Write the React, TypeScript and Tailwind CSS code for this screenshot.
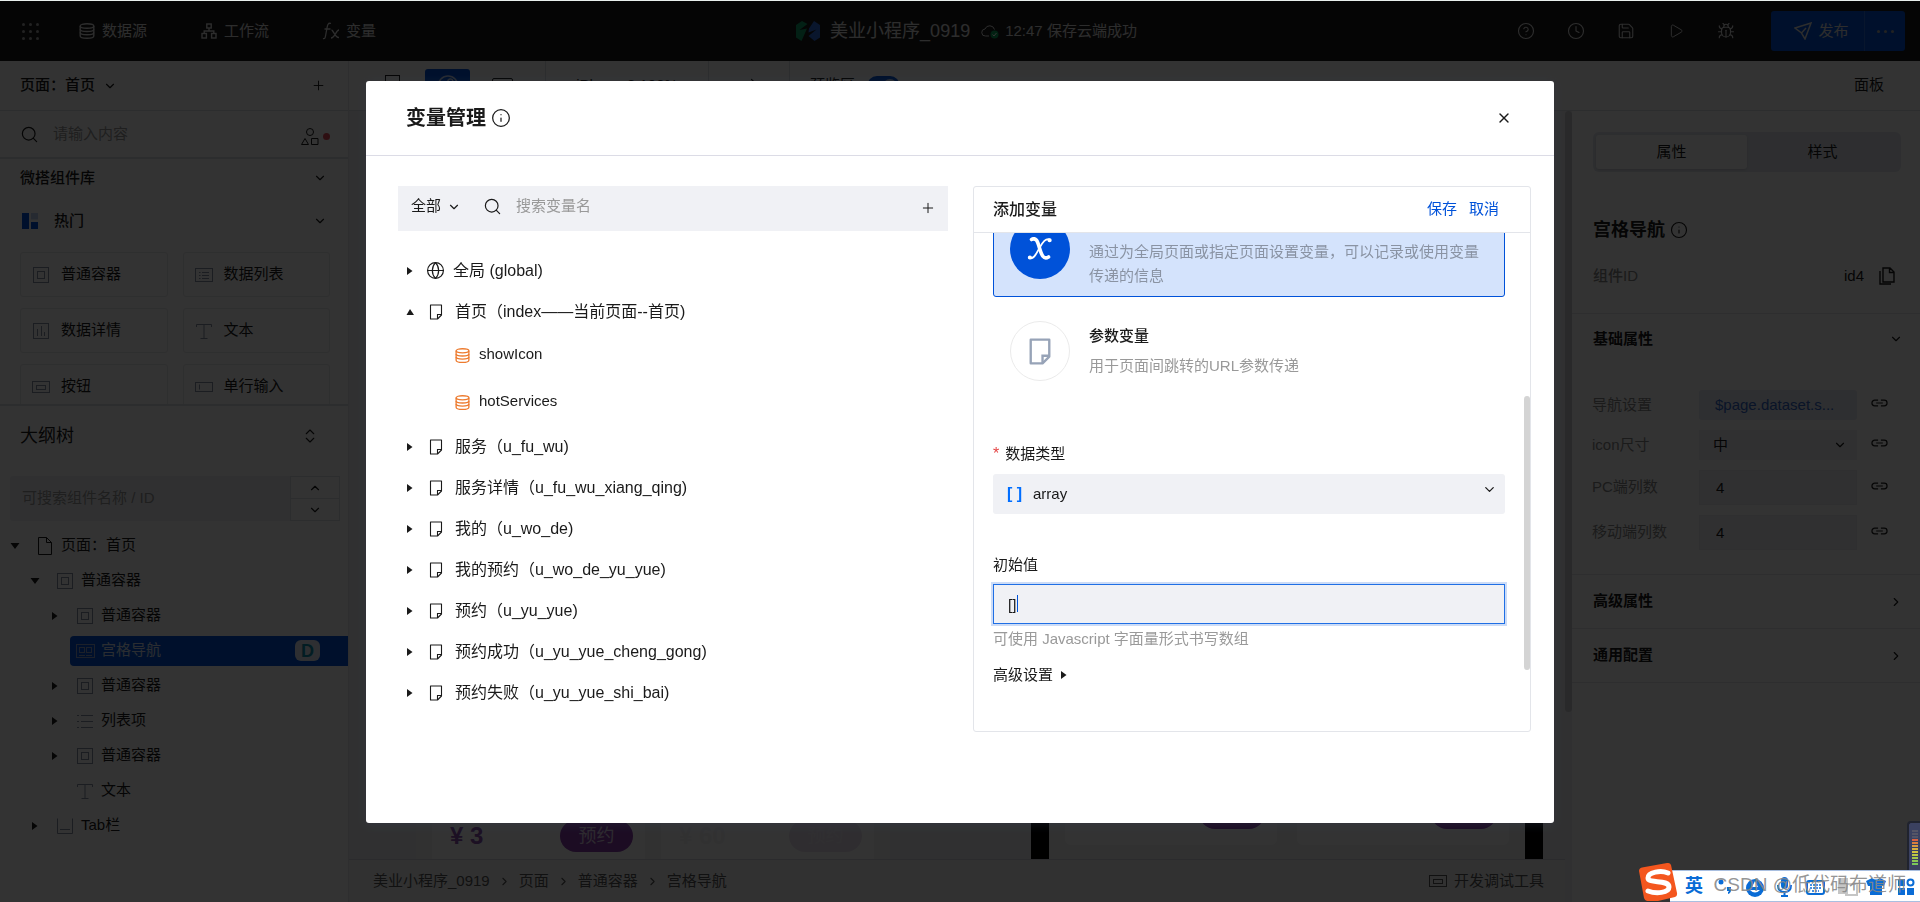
import React from "react";
import {
  Bug,
  ChevronDown,
  ChevronRight,
  ChevronUp,
  ChevronsUpDown,
  CircleHelp,
  Clock,
  Globe,
  Info,
  Plus,
  Play,
  Redo2,
  Save,
  Search,
  X,
} from "lucide-react";

type IconName =
  | "box"
  | "list"
  | "chart"
  | "text"
  | "button"
  | "input"
  | "grid"
  | "items"
  | "tab"
  | "page";

const iconShapes: Record<IconName, React.ReactNode> = {
  box: (
    <>
      <rect x="0.5" y="0.5" width="15" height="15" />
      <rect x="4.5" y="4.5" width="7" height="7" />
    </>
  ),
  list: (
    <>
      <rect x="-0.5" y="1.5" width="17" height="13" />
      <path d="M3 5.5h1.500M6 5.5h7M3 8.5h1.500M6 8.5h7M3 11.5h1.500M6 11.5h7" />
    </>
  ),
  chart: (
    <>
      <rect x="0.5" y="0.5" width="15" height="15" />
      <path d="M4.5 6v7M8.5 3v10M11.5 9v4" />
    </>
  ),
  text: <path d="M0.500 4V1.500h15V4M8 1.500v14M4.500 15.500h7" />,
  button: (
    <>
      <rect x="-0.5" y="2.5" width="17" height="11" />
      <rect x="3.5" y="6.5" width="9" height="4" />
    </>
  ),
  input: (
    <>
      <rect x="-0.5" y="3.5" width="17" height="9" />
      <path d="M3.500 5.500v5" />
    </>
  ),
  grid: (
    <>
      <rect x="-0.5" y="1.5" width="18" height="13" />
      <rect x="2.5" y="4.500" width="5" height="5" />
      <rect x="9.500" y="4.500" width="5" height="5" />
      <path d="M2 12.500h6M9 12.500h6" />
    </>
  ),
  items: <path d="M0 2.500h2M4 2.500h12M0 8.500h2M4 8.500h12M0 14.500h2M4 14.500h12" />,
  tab: <path d="M0.500 0.500v15h15V0.500M3 11.500h10" />,
  page: <path d="M1.500 -0.500h8l5 5v12H1.500zM9.500 -0.500V4.500H14.500" />,
};

const Shape = ({ name, className = "" }: { name: IconName; className?: string }) => (
  <svg
    viewBox="0 0 16 16"
    className={`size-4 shrink-0 overflow-visible ${className}`}
    fill="none"
    stroke="currentColor"
  >
    {iconShapes[name]}
  </svg>
);

const NoteIcon = ({ className = "", stroke = 1.1 }: { className?: string; stroke?: number }) => (
  <svg viewBox="0 0 14 16" className={className} fill="none" stroke="currentColor" strokeWidth={stroke}>
    <path d="M1.500 1h11v10l-4 4h-7z" strokeLinejoin="round" />
    <path d="M12.500 10.500H8.500V15" />
  </svg>
);

const CylinderIcon = ({ className = "" }: { className?: string }) => (
  <svg viewBox="0 0 16 16" className={className} fill="none" stroke="currentColor" strokeWidth="1.4">
    <ellipse cx="8" cy="3" rx="6.800" ry="2.200" />
    <path d="M1.200 3v10c0 1.300 3 2.300 6.800 2.300s6.800-1 6.800-2.300V3" />
    <path d="M1.200 6.300c0 1.300 3 2.200 6.800 2.200s6.800-.9 6.800-2.200M1.200 9.600c0 1.300 3 2.200 6.800 2.200s6.800-.9 6.800-2.200" />
  </svg>
);

const Triangle = ({ dir }: { dir: "right" | "down" | "up" | "none" }) => (
  <svg viewBox="0 0 10 10" className="size-[10px] shrink-0" fill="currentColor">
    {dir === "right" && <path d="M2 1L7.500 5L2 9z" />}
    {dir === "down" && <path d="M0.500 2h9L5 8z" />}
    {dir === "up" && <path d="M1.500 8h7.500L5 2z" />}
  </svg>
);

const TopBar = () => (
  <header className="flex h-[61px] shrink-0 items-center border-t border-[#e8efec] bg-[#1a1a1a] pl-2 text-[15px] text-[#e0e0e0]">
    <div className="flex flex-1 items-center">
      <button aria-label="应用" className="ml-[14px] grid size-[17px] grid-cols-3 gap-1">
        {Array.from({ length: 9 }, (_, i) => (
          <span key={i} className="size-[3px] rounded-full bg-[#aaa]" />
        ))}
      </button>
      <button className="ml-10 flex items-center gap-[7px]">
        <CylinderIcon className="size-4" />
        数据源
      </button>
      <button className="ml-[54px] flex items-center gap-[7px]">
        <svg viewBox="0 0 16 16" className="size-4" fill="none" stroke="currentColor" strokeWidth="1.4">
          <rect x="5.800" y="1" width="4.400" height="4" />
          <rect x="1" y="10.500" width="4.400" height="4.500" />
          <rect x="10.600" y="10.500" width="4.400" height="4.500" />
          <path d="M8 5v3M3.200 10.500V8h9.600v2.500" />
        </svg>
        工作流
      </button>
      <button className="ml-[53px] flex items-center gap-[6px]">
        <svg viewBox="0 0 18 18" className="size-[18px]" fill="none" stroke="currentColor" strokeWidth="1.3">
          <path d="M9 1.500C6 .5 5.500 3 5 6L3.500 14c-.4 2.500-1 3-2.500 2.500M2.500 7h6M9.500 8c2 0 3.500 8 7.500 7.500M17 8c-3 0-4 8-8 8" />
        </svg>
        变量
      </button>
    </div>
    <div className="flex items-center pl-5 text-lg">
      <svg viewBox="0 0 24 20" className="mr-[10px] h-5 w-6">
        <path d="M0 4l6-4 5.500 3L3.500 9 11 7.500 5.500 20 0 16.500z" fill="#12a06b" />
        <path d="M24 4l-6-4-5 7.500-.5 4 8-3L12.500 15l6 5L24 16.500z" fill="#2f6fe0" />
      </svg>
      美业小程序_0919
      <svg viewBox="0 0 18 16" className="ml-[11px] mr-[6px] h-4 w-[18px]" fill="none" stroke="currentColor">
        <path d="M8 13H4.500a3.500 3.500 0 0 1-.5-7 5 5 0 0 1 9.500.5" />
        <circle cx="13.500" cy="11.500" r="4" fill="#0aa55c" stroke="none" />
        <path d="M11.500 11.500l1.500 1.500 2.500-3" stroke="#fff" />
      </svg>
      <span className="text-[15px]">12:47 保存云端成功</span>
    </div>
    <div className="flex flex-1 items-center justify-end gap-8 pr-[15px]">
      <button aria-label="帮助"><CircleHelp size={18} strokeWidth={1.5} /></button>
      <button aria-label="历史"><Clock size={18} strokeWidth={1.5} /></button>
      <button aria-label="保存文件"><Save size={18} strokeWidth={1.5} /></button>
      <button aria-label="预览" className="px-px"><Play size={16} strokeWidth={1.5} /></button>
      <button aria-label="调试"><Bug size={18} strokeWidth={1.5} /></button>
      <div className="ml-1 flex h-10 overflow-hidden rounded-[3px] bg-[#0052d9]">
        <button className="flex w-[94px] items-center justify-center gap-[6px] border-r border-[#2a6de0] pl-2">
          <svg viewBox="0 0 18 18" className="size-[18px]" fill="none" stroke="currentColor" strokeWidth="1.5">
            <path d="M1 6l16-5-6 16-3.500-6zM7.500 11L12 6" />
          </svg>
          发布
        </button>
        <button aria-label="更多" className="flex w-10 items-center justify-center gap-1">
          <span className="size-[3px] rounded-full bg-[#aaa]" />
          <span className="size-[3px] rounded-full bg-[#aaa]" />
          <span className="size-[3px] rounded-full bg-[#aaa]" />
        </button>
      </div>
    </div>
  </header>
);

const widgets: { icon: IconName; label: string }[] = [
  { icon: "box", label: "普通容器" },
  { icon: "list", label: "数据列表" },
  { icon: "chart", label: "数据详情" },
  { icon: "text", label: "文本" },
  { icon: "button", label: "按钮" },
  { icon: "input", label: "单行输入" },
];

interface IOutlineRow {
  level: number;
  icon: IconName;
  label: string;
  dir: "right" | "down" | "none";
}

const outline: IOutlineRow[] = [
  { level: 1, icon: "box", label: "普通容器", dir: "down" },
  { level: 2, icon: "box", label: "普通容器", dir: "right" },
  { level: 2, icon: "grid", label: "宫格导航", dir: "none" },
  { level: 2, icon: "box", label: "普通容器", dir: "right" },
  { level: 2, icon: "items", label: "列表项", dir: "right" },
  { level: 2, icon: "box", label: "普通容器", dir: "right" },
  { level: 2, icon: "text", label: "文本", dir: "none" },
  { level: 1, icon: "tab", label: "Tab栏", dir: "right" },
];

const indents = ["pl-[10px]", "pl-[30px]", "pl-[50px]"];

const OutlineRow = ({ level, icon, label, dir }: IOutlineRow) => {
  if (icon === "grid") {
    return (
      <li className="flex h-[35px] items-center pl-[70px]">
        <div className="flex h-[30px] flex-1 items-center rounded-l-sm bg-[#0052d9] pl-[7px] pr-7 text-[#d8e2f5]">
          <Shape name={icon} className="text-[#8aa0cc]" />
          <span className="ml-2 flex-1">{label}</span>
          <span className="flex h-[21px] w-[25px] items-center justify-center rounded-md bg-[#e3ecf7] text-lg font-bold text-[#0a8fb0]">
            D
          </span>
        </div>
      </li>
    );
  }
  return (
    <li className={`flex h-[35px] items-center ${indents[level]}`}>
      <Triangle dir={dir} />
      <Shape name={icon} className="ml-[17px] mr-2 text-[#8790a5]" />
      {label}
    </li>
  );
};

const LeftPanel = () => (
  <aside className="flex w-[349px] shrink-0 flex-col border-r border-[#e3e5ea] bg-white text-[15px] text-[#1a1a1a]">
    <div className="flex h-[50px] shrink-0 items-center justify-between border-b border-[#dcdfe6] pl-5 pr-[22px]">
      <button className="flex items-center gap-2 font-medium">
        页面：首页 <ChevronDown size={14} />
      </button>
      <button aria-label="新建页面"><Plus size={15} strokeWidth={1.5} /></button>
    </div>
    <div className="flex h-12 shrink-0 items-center border-b-2 border-[#dcdfe6] pl-5 pr-[18px] pt-px">
      <Search size={19} strokeWidth={1.5} />
      <input
        aria-label="搜索组件"
        placeholder="请输入内容"
        className="ml-[14px] min-w-0 flex-1 outline-none placeholder:text-[#999]"
      />
      <svg viewBox="0 0 18 18" className="mt-1 size-[18px]" fill="none" stroke="currentColor">
        <circle cx="9" cy="4" r="3.500" />
        <path d="M0.500 16.500L4 10.500l3.500 6zM10.500 10.500h6.500v6h-6.500z" />
      </svg>
      <span className="ml-1 mt-1 size-[7px] rounded-full bg-[#e34d59]" />
    </div>
    <div className="h-[245px] shrink-0 overflow-hidden pl-5 pr-[18px]">
      <button className="flex h-[38px] w-full items-center justify-between pr-[3px] font-medium">
        微搭组件库 <ChevronDown size={14} />
      </button>
      <button className="flex h-12 w-full items-center pr-[3px] font-medium">
        <svg viewBox="0 0 16 16" className="ml-[2px] mr-4 size-4">
          <path d="M0 0h7v16H0z" fill="#0052d9" />
          <path d="M9 9h7v7H9z" fill="#0052d9" />
          <path d="M9 0h7v6.500H9z" fill="#bcd0f5" />
        </svg>
        <span className="flex-1 text-left">热门</span>
        <ChevronDown size={14} />
      </button>
      <div className="grid grid-cols-2 gap-x-[15px] gap-y-[11px] pt-[7px]">
        {widgets.map(({ icon, label }) => (
          <button
            key={label}
            className="flex h-[45px] items-center rounded-[3px] border border-[#e6e8ec] pl-3"
          >
            <Shape name={icon} className="mr-3 text-[#8790a5]" />
            {label}
          </button>
        ))}
      </div>
    </div>
    <div className="flex h-[62px] shrink-0 items-center justify-between border-t-2 border-[#dcdfe6] pl-5 pr-[29px] text-lg">
      大纲树
      <button aria-label="展开大纲树"><ChevronsUpDown size={18} strokeWidth={1.5} /></button>
    </div>
    <div className="ml-[10px] mr-2 mt-[10px] flex h-[45px] shrink-0 rounded-[3px] bg-[#f0f1f5]">
      <input
        aria-label="搜索大纲树"
        placeholder="可搜索组件名称 / ID"
        className="min-w-0 flex-1 px-3 outline-none placeholder:text-[#999]"
      />
      <div className="flex w-[50px] flex-col divide-y divide-[#dcdfe6] border border-[#dcdfe6] bg-white">
        <button aria-label="上一个" className="flex flex-1 items-center justify-center">
          <ChevronUp size={14} />
        </button>
        <button aria-label="下一个" className="flex flex-1 items-center justify-center">
          <ChevronDown size={14} />
        </button>
      </div>
    </div>
    <ul className="mt-[7px]">
      <li className="flex h-[35px] items-center pl-[10px]">
        <Triangle dir="down" />
        <Shape name="page" className="ml-[17px] mr-2" />
        页面：首页
      </li>
      {outline.map((row, i) => (
        <OutlineRow key={i} {...row} />
      ))}
    </ul>
  </aside>
);

const Toolbar = () => (
  <div className="flex h-[50px] shrink-0 items-center border-b border-[#dcdfe6] bg-white text-[15px] text-[#1a1a1a]">
    <button aria-label="手机" className="ml-9 h-[22px] w-[15px] border border-current" />
    <button
      aria-label="小程序"
      className="ml-[25px] flex h-[34px] w-[45px] items-center justify-center rounded-[3px] bg-[#0052d9] text-[#c5d6f5]"
    >
      <svg viewBox="0 0 22 22" className="size-[22px]" fill="none" stroke="currentColor" strokeWidth="1.500">
        <circle cx="11" cy="11" r="10" />
        <path d="M8 13a2.500 2.500 0 1 0 3 2V7a2.500 2.500 0 1 1 3 2" />
      </svg>
    </button>
    <button aria-label="电脑" className="ml-[22px] h-4 w-[21px] rounded-[2px] border border-current" />
    <span className="ml-8 h-full w-px bg-[#dcdfe6]" />
    <span className="w-[162px] text-center">iPhone 8 100%</span>
    <span className="h-full w-px bg-[#dcdfe6]" />
    <button aria-label="重做" className="flex w-20 justify-center"><Redo2 size={20} strokeWidth={1.5} /></button>
    <span className="h-full w-px bg-[#dcdfe6]" />
    <span className="ml-5">预览区</span>
    <button aria-label="切换预览区" className="ml-3 flex h-5 w-[33px] items-center justify-end rounded-full bg-[#0052d9] p-[3px]">
      <span className="size-[14px] rounded-full bg-[#c5d6f5]" />
    </button>
    <button className="ml-auto mr-9">面板</button>
  </div>
);

// Only the lower edge of the canvas stays visible under the dialog.
const Canvas = () => (
  <div className="flex flex-1 flex-col justify-end overflow-hidden bg-[#f0f1f5]">
    <div className="flex h-[46px] items-stretch">
      <div className="ml-[67px] flex w-[474px] gap-4 bg-[#f3f5f5] px-4">
        <div className="flex flex-1 items-center justify-between bg-white pl-[18px] pr-3">
          <span className="text-2xl font-bold text-[#8a4fae]">¥ 3</span>
          <span className="flex h-8 w-[73px] items-center justify-center rounded-full bg-[#8a3fae] text-lg text-[#e0d0ea]">
            预约
          </span>
        </div>
        <div className="flex flex-1 items-center justify-between bg-white pl-[18px] pr-3">
          <span className="text-2xl font-bold text-[#f2f2f6]">¥ 60</span>
          <span className="flex h-8 w-[73px] items-center justify-center rounded-full bg-[#ebe2f0] text-lg text-[#f0eaf4]">
            预约
          </span>
        </div>
      </div>
      <div className="ml-auto mr-[22px] flex w-[512px] items-start justify-center gap-5 border-x-[18px] border-black bg-[#f3f5f5] px-4">
        <div className="flex h-8 flex-1 items-start justify-end rounded-b-md bg-white pr-3">
          <span className="h-4 w-[66px] rounded-b-full bg-[#8a3fae]" />
        </div>
        <div className="flex h-8 flex-1 items-start justify-end rounded-b-md bg-white pr-3">
          <span className="h-4 w-[66px] rounded-b-full bg-[#8a3fae]" />
        </div>
      </div>
    </div>
  </div>
);

const crumbs = ["美业小程序_0919", "页面", "普通容器", "宫格导航"];

const Footer = () => (
  <footer className="flex h-[43px] shrink-0 items-center border-t border-[#d5d8de] bg-[#f5f5f5] pl-6 pr-[21px] text-[15px] text-[#555]">
    <nav className="flex items-center">
      {crumbs.map((crumb, i) => (
        <React.Fragment key={crumb}>
          {i > 0 && <ChevronRight size={13} strokeWidth={2} className="mx-2" />}
          <a href="#">{crumb}</a>
        </React.Fragment>
      ))}
    </nav>
    <button className="ml-auto flex items-center gap-2">
      <Shape name="button" />
      开发调试工具
    </button>
  </footer>
);

const LinkButton = ({ label }: { label: string }) => (
  <button aria-label={`绑定${label}`} className="ml-[14px] pb-1">
    <svg viewBox="0 0 18 8" className="h-2 w-[17px]" fill="none" stroke="currentColor" strokeWidth="1.3">
      <path d="M7.500 1H4a3 3 0 0 0 0 6h3.500M10.500 1H14a3 3 0 0 1 0 6h-3.500M5.500 4h7" />
    </svg>
  </button>
);

const PropsPanel = () => (
  <aside className="flex w-[348px] shrink-0 flex-col bg-white text-[15px] text-[#1a1a1a]">
    <div className="ml-[21px] mr-[19px] mt-[21px] flex h-10 rounded-md bg-[#e3e7ee] p-[3px]">
      <button className="flex-1 rounded-[3px] bg-white shadow-sm">属性</button>
      <button className="flex-1">样式</button>
    </div>
    <h2 className="mt-11 flex h-7 items-center gap-[5px] pl-[21px] text-lg font-bold">
      宫格导航 <Info size={18} strokeWidth={1.5} />
    </h2>
    <div className="mt-5 flex h-6 items-center pl-[21px] pr-[25px]">
      <span className="font-medium text-[#888]">组件ID</span>
      <span className="ml-auto mr-[15px]">id4</span>
      <button aria-label="复制组件ID">
        <svg viewBox="0 0 16 18" className="h-[18px] w-4" fill="none" stroke="currentColor" strokeWidth="1.400">
          <path d="M4 1h7l4 4v10H4zM10.500 1v4.500H15M1 4v13h11" />
        </svg>
      </button>
    </div>
    <button className="mt-[25px] flex h-[51px] items-center justify-between border-t border-[#e3e5ea] pl-[21px] pr-[17px] font-bold">
      基础属性 <ChevronDown size={14} />
    </button>
    <div className="flex flex-col gap-[10px] border-b border-[#e3e5ea] pb-6 pl-5 pr-8 pt-[26px]">
      <div className="flex h-[30px] items-center">
        <span className="w-[107px] text-[#888]">导航设置</span>
        <button className="h-full min-w-0 flex-1 truncate rounded-[3px] bg-[#e6eaf2] pl-4 text-left text-[#3366c8]">
          $page.dataset.s...
        </button>
        <LinkButton label="导航设置" />
      </div>
      <div className="flex h-[30px] items-center">
        <label htmlFor="icon-size" className="w-[107px] text-[#888]">icon尺寸</label>
        <div className="relative h-full min-w-0 flex-1 bg-[#f0f1f5]">
          <select id="icon-size" className="h-full w-full appearance-none pl-[14px] outline-none">
            <option>中</option>
          </select>
          <ChevronDown size={14} className="absolute right-[10px] top-2" />
        </div>
        <LinkButton label="icon尺寸" />
      </div>
      {["PC端列数", "移动端列数"].map((label) => (
        <div key={label} className="flex h-[35px] items-center">
          <label htmlFor={label} className="w-[107px] text-[#888]">{label}</label>
          <input
            id={label}
            defaultValue="4"
            className="h-full min-w-0 flex-1 border border-[#e9ebf0] bg-[#f0f1f5] pl-4 outline-none"
          />
          <LinkButton label={label} />
        </div>
      ))}
    </div>
    {["高级属性", "通用配置"].map((label) => (
      <button
        key={label}
        className="flex h-[54px] items-center justify-between border-b border-[#e3e5ea] pl-[21px] pr-[17px] font-bold"
      >
        {label} <ChevronRight size={14} />
      </button>
    ))}
  </aside>
);

const pages = [
  "服务（u_fu_wu)",
  "服务详情（u_fu_wu_xiang_qing)",
  "我的（u_wo_de)",
  "我的预约（u_wo_de_yu_yue)",
  "预约（u_yu_yue)",
  "预约成功（u_yu_yue_cheng_gong)",
  "预约失败（u_yu_yue_shi_bai)",
];

const PageRow = ({ label, dir = "right" }: { label: string; dir?: "right" | "up" }) => (
  <li className="flex h-[41px] items-center pl-[7px] text-base">
    <Triangle dir={dir} />
    <NoteIcon className="ml-[14px] mr-3 h-4 w-[14px]" />
    {label}
  </li>
);

const VariableTree = () => (
  <section className="min-w-0 flex-[551]">
    <div className="flex h-[45px] items-center bg-[#f0f1f5] pb-1 pl-[13px] pr-3">
      <div className="relative">
        <select aria-label="变量范围" className="w-[50px] appearance-none outline-none">
          <option>全部</option>
        </select>
        <ChevronDown size={14} className="absolute right-0 top-[5px]" />
      </div>
      <Search size={19} strokeWidth={1.5} className="ml-[22px]" />
      <input
        aria-label="搜索变量名"
        placeholder="搜索变量名"
        className="ml-[14px] min-w-0 flex-1 outline-none placeholder:text-[#999]"
      />
      <button aria-label="新增变量" className="pt-[3px]"><Plus size={16} strokeWidth={1.5} /></button>
    </div>
    <ul className="mt-[19px]">
      <li className="flex h-[41px] items-center pl-[7px] text-base">
        <Triangle dir="right" />
        <Globe size={19} strokeWidth={1.5} className="ml-[11px] mr-2" />
        全局 (global)
      </li>
      <PageRow label="首页（index——当前页面--首页)" dir="up" />
      {["showIcon", "hotServices"].map((name) => (
        <li key={name} className="flex h-[47px] items-center gap-[9px] pb-[2px] pl-[57px]">
          <CylinderIcon className="mt-[2px] size-[15px] text-[#ed7b2f]" />
          {name}
        </li>
      ))}
      {pages.map((page) => (
        <PageRow key={page} label={page} />
      ))}
    </ul>
  </section>
);

const VariableForm = () => (
  <section className="flex min-w-0 flex-[557] flex-col rounded-[3px] border border-[#e3e5ea]">
    <div className="flex h-[46px] shrink-0 items-center border-b border-[#e3e5ea] pl-[19px] pr-[31px]">
      <h3 className="flex-1 text-base font-medium">添加变量</h3>
      <button className="text-[#0052d9]">保存</button>
      <button className="ml-3 text-[#0052d9]">取消</button>
    </div>
    <div className="relative flex min-h-0 flex-1 flex-col justify-end overflow-hidden pb-11 pl-[19px] pr-[25px]">
      <div className="flex h-24 shrink-0 items-center rounded-[3px] border border-[#0052d9] bg-[#d4e3fc] pl-4 pr-6">
        <span className="flex size-[60px] shrink-0 items-center justify-center rounded-full bg-[#0052d9] text-white">
          <svg viewBox="0 0 26 24" className="h-6 w-[26px]" fill="none" stroke="currentColor" strokeLinecap="round">
            <path d="M4.500 2.500C9 0 10.500 4 12.500 11S16.500 23 21.500 20" strokeWidth="3.600" />
            <path d="M23 2.500C18 1 15.500 6 12.500 11S7 23 2.500 21" strokeWidth="1.800" />
            <path d="M22.500 3.300h.2M2.800 20.500h.2" strokeWidth="4" />
          </svg>
        </span>
        <p className="ml-[19px] self-end pb-2 leading-6 text-[#8a93a3]">
          通过为全局页面或指定页面设置变量，可以记录或使用变量传递的信息
        </p>
      </div>
      <div className="mt-[6px] flex h-24 shrink-0 items-center pl-[17px]">
        <span className="flex size-[60px] items-center justify-center rounded-full border border-[#ebebeb]">
          <NoteIcon className="h-[27px] w-6 text-[#97a3b7]" stroke={1.4} />
        </span>
        <div className="ml-[19px] flex flex-col gap-[6px] leading-6">
          <h4 className="font-medium">参数变量</h4>
          <p className="text-[#999]">用于页面间跳转的URL参数传递</p>
        </div>
      </div>
      <label htmlFor="data-type" className="mt-[43px] leading-6">
        <span className="mr-[6px] text-base text-[#e54545]">*</span>数据类型
      </label>
      <div className="relative mt-2 h-10 shrink-0 rounded-[3px] bg-[#f0f1f5]">
        <span className="absolute left-[14px] top-2 text-base font-bold text-[#006eff]">[ ]</span>
        <select id="data-type" className="h-full w-full appearance-none pl-10 outline-none">
          <option>array</option>
        </select>
        <ChevronDown size={15} className="absolute right-2 top-2" />
      </div>
      <label htmlFor="initial-value" className="mt-[39px] leading-6">初始值</label>
      <div className="relative mt-[7px] h-10 shrink-0">
        <input
          id="initial-value"
          defaultValue="[]"
          className="h-full w-full border border-[#1f6fe5] bg-[#f0f1f5] pl-[14px] outline-none ring-2 ring-[#ccdcf7]"
        />
        <span className="absolute left-6 top-[11px] h-[17px] w-px bg-[#0052d9]" />
      </div>
      <p className="mt-[3px] leading-6 text-[#999]">可使用 Javascript 字面量形式书写数组</p>
      <button className="mt-3 flex items-center gap-[6px] leading-6">
        高级设置 <Triangle dir="right" />
      </button>
      <span className="absolute bottom-[61px] right-0 h-[274px] w-[6px] rounded-full bg-[#d4d4d4]" />
    </div>
  </section>
);

const VariableDialog = () => (
  <div className="fixed inset-x-0 bottom-0 top-px flex items-start justify-center bg-black/80 pt-20">
    <div
      role="dialog"
      aria-labelledby="dialog-title"
      className="flex h-[calc(100%-79px)] w-full max-w-[1188px] flex-col rounded-[3px] bg-white text-[15px] text-[#1a1a1a] shadow-[0_2px_10px_rgba(54,58,80,0.32)]"
    >
      <div className="flex h-[75px] shrink-0 items-center justify-between border-b border-[#dcdce6] pl-10 pr-[42px]">
        <h1 id="dialog-title" className="flex items-center gap-[5px] text-xl font-bold">
          变量管理 <Info size={20} strokeWidth={1.5} />
        </h1>
        <button aria-label="关闭"><X size={16} /></button>
      </div>
      <div className="flex min-h-0 flex-1 gap-[25px] pb-[91px] pl-8 pr-[23px] pt-[30px]">
        <VariableTree />
        <VariableForm />
      </div>
    </div>
  </div>
);

const meter = [
  "bg-[#556]",
  "bg-[#556]",
  "bg-[#556]",
  "bg-[#d9603f]",
  "bg-[#d97f3f]",
  "bg-[#d99a3f]",
  "bg-[#d9b13f]",
  "bg-[#cfc33f]",
  "bg-[#bcc944]",
  "bg-[#a3c94a]",
  "bg-[#8cc653]",
  "bg-[#7ac65a]",
];

const InputMethodBar = () => (
  <div className="fixed bottom-0 right-0 flex flex-col items-end">
    <div className="flex h-[49px] w-[13px] flex-col gap-px rounded-tl-[4px] border-l-2 border-t-2 border-[#20232e] bg-[#3b4160] pl-[3px] pr-[2px] pt-[7px]">
      {meter.map((color, i) => (
        <span key={i} className={`h-[2px] w-full shrink-0 ${color}`} />
      ))}
    </div>
    <div className="relative flex h-8 w-[250px] items-center border-y border-[#a9bfe0] bg-white text-[#0a6cd6]">
      <svg viewBox="0 0 40 38" className="absolute -left-8 bottom-0 h-[38px] w-10">
        <path d="M1 8q0-3 3-3.500L29 0q3-.3 4 2l6 28q.5 3-2 4l-17 4H9Q7 38 6 35z" fill="#f4561e" />
        <path
          d="M30 10C23 7 10 9 10 15c0 6 21 1 21 9 0 6-13 7-21 4"
          fill="none"
          stroke="#fff"
          strokeWidth="5"
          strokeLinecap="round"
        />
      </svg>
      <span className="ml-[15px] text-lg font-bold">英</span>
      <svg viewBox="0 0 200 26" className="ml-[14px] h-[26px] w-[200px]" fill="currentColor">
        <circle cx="4" cy="9" r="2.500" />
        <path d="M10 14h4v3q0 3-3 4v-2q1-.5 1-1h-2z" />
        <circle cx="38" cy="15" r="9" />
        <path d="M33 17q5 5 10 0zM38 8l3 6h-6z" fill="#fff" />
        <rect x="64" y="4" width="7" height="12" rx="3.500" />
        <path d="M61 12q0 7 6.500 7t6.500-7M67.500 19v4M64 23h7" fill="none" stroke="currentColor" strokeWidth="2" />
        <rect x="90" y="8" width="17" height="13" rx="2" fill="none" stroke="currentColor" strokeWidth="2" />
        <path d="M93 12h11M93 15h11M95 18h7" stroke="currentColor" strokeWidth="1.500" strokeDasharray="2 1" />
        <rect x="121" y="5" width="10" height="16" fill="#c5c5c5" />
        <rect x="129" y="11" width="11" height="11" fill="none" stroke="#c5c5c5" strokeWidth="2" />
        <path d="M149 8l6-3q4 3 8 0l6 3-2 5h-2v9h-12v-9h-2z" />
        <path d="M181 6h7v7h-7zM181 15h7v7h-7zM190 15h7v7h-7z" />
        <circle cx="193.500" cy="9.500" r="3" fill="none" stroke="currentColor" strokeWidth="2" />
      </svg>
      <span className="absolute bottom-[2px] right-[14px] whitespace-nowrap text-[19px] text-[#888]/90">
        CSDN @低代码布道师
      </span>
    </div>
  </div>
);

export default function App() {
  return (
    <div className="flex h-screen flex-col overflow-hidden bg-[#f0f1f5] font-['Liberation_Sans','Noto_Sans_CJK_SC',sans-serif]">
      <TopBar />
      <div className="flex min-h-0 flex-1">
        <LeftPanel />
        <div className="flex min-w-0 flex-1 flex-col">
          <Toolbar />
          <div className="flex min-h-0 flex-1">
            <main className="flex min-w-0 flex-1 flex-col">
              <Canvas />
              <Footer />
            </main>
            <div className="w-[7px] bg-[#f0f1f5]">
              <div className="h-[76%] rounded-full bg-[#cdcdcf]" />
            </div>
            <PropsPanel />
          </div>
        </div>
      </div>
      <VariableDialog />
      <InputMethodBar />
    </div>
  );
}
